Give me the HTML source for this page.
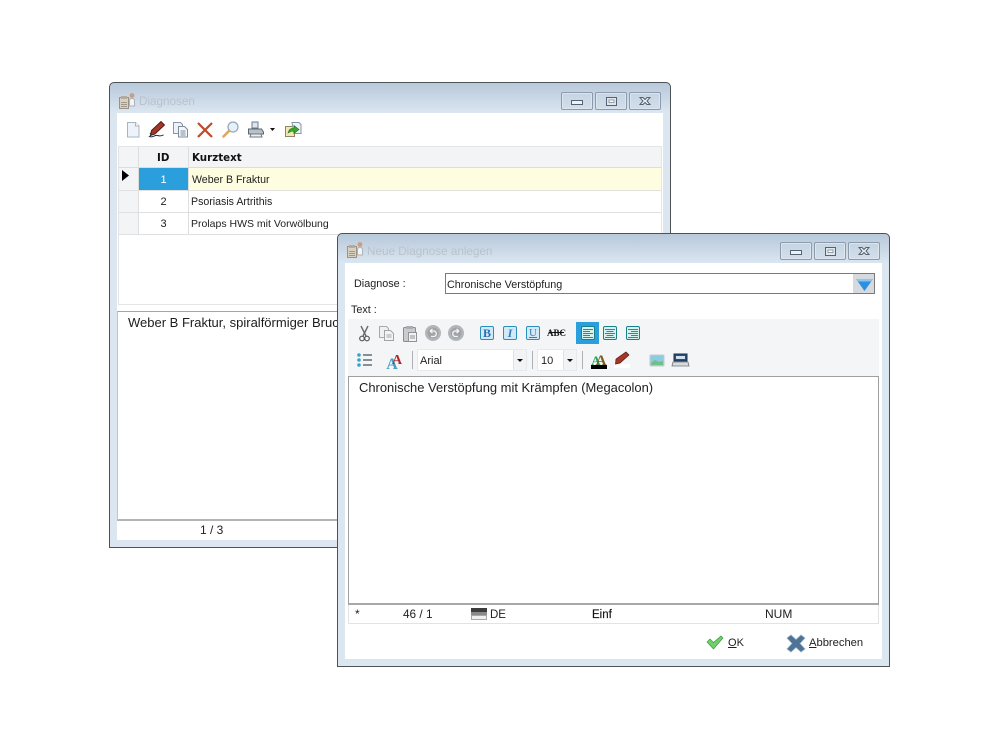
<!DOCTYPE html>
<html lang="de"><head><meta charset="utf-8"><title>Diagnosen</title>
<style>
html,body{margin:0;padding:0;background:#fff;width:1000px;height:750px;overflow:hidden}
body{position:relative;font-family:"Liberation Sans",Arial,sans-serif;font-size:11px;color:#222}
.a{position:absolute;box-sizing:border-box}
.t{position:absolute;white-space:nowrap;line-height:14px}
.win{position:absolute;box-sizing:border-box;border:1px solid #4f5255;border-radius:5px 5px 0 0;background:linear-gradient(#b8c9da 0,#dbe6f1 30px,#dbe6f1 100%)}
.title{position:absolute;color:#b9c2cb;font-size:11.7px;line-height:14px;white-space:nowrap}
.btn{position:absolute;box-sizing:border-box;width:32px;height:18px;border:1px solid #8b9bac;border-radius:2px;background:linear-gradient(#c6d4e2,#d2deea);box-shadow:inset 0 0 0 1px #dde6ef}
svg{position:absolute;left:0;top:0;overflow:visible}
</style></head><body>

<!-- Window 1 -->
<div class="win" style="left:109px;top:82px;width:562px;height:466px"></div>
<div class="a" style="left:117px;top:113px;width:546px;height:427px;background:#fff"></div>
<div class="title" style="left:139px;top:95px">Diagnosen</div>
<div class="btn" style="left:561px;top:92px"></div>
<div class="btn" style="left:595px;top:92px"></div>
<div class="btn" style="left:629px;top:92px"></div>

<!-- grid -->
<div class="a" style="left:118px;top:146px;width:544px;height:159px;border:1px solid #e4e5e5;background:#fff"></div>
<div class="a" style="left:119px;top:147px;width:542px;height:21px;background:#f2f4f6;border-bottom:1px solid #dcdcdc"></div>
<div class="a" style="left:119px;top:168px;width:20px;height:66px;background:#f2f4f6"></div>
<div class="a" style="left:139px;top:168px;width:49px;height:22px;background:#2a9fdc"></div>
<div class="a" style="left:188px;top:168px;width:473px;height:22px;background:#fefde0"></div>
<div class="a" style="left:119px;top:190px;width:542px;height:1px;background:#e0e0e0"></div>
<div class="a" style="left:119px;top:212px;width:542px;height:1px;background:#e0e0e0"></div>
<div class="a" style="left:119px;top:234px;width:542px;height:1px;background:#e0e0e0"></div>
<div class="a" style="left:138px;top:147px;width:1px;height:87px;background:#dedede"></div>
<div class="a" style="left:188px;top:147px;width:1px;height:87px;background:#dedede"></div>
<div class="t" style="left:157px;top:151px;font-family:'DejaVu Sans',sans-serif;font-weight:bold;font-size:10.3px;color:#111">ID</div>
<div class="t" style="left:192px;top:151px;font-family:'DejaVu Sans',sans-serif;font-weight:bold;font-size:10.3px;color:#111">Kurztext</div>
<div class="t" style="left:139px;width:49px;text-align:center;top:173px;color:#fff;font-size:11px">1</div>
<div class="t" style="left:139px;width:49px;text-align:center;top:195px;font-size:11px">2</div>
<div class="t" style="left:139px;width:49px;text-align:center;top:217px;font-size:11px">3</div>
<div class="t" style="left:192px;top:173px;font-size:10.6px">Weber B Fraktur</div>
<div class="t" style="left:191px;top:195px;font-size:10.6px">Psoriasis Artrithis</div>
<div class="t" style="left:191px;top:217px;font-size:10.5px">Prolaps HWS mit Vorwölbung</div>

<!-- memo -->
<div class="a" style="left:117px;top:311px;width:546px;height:210px;border-top:1px solid #a5a5a5;border-bottom:2px solid #b4b4b4;border-left:1px solid #c4c4c4;background:#fff"></div>
<div class="t" style="left:128px;top:315px;font-size:13px;line-height:16px;width:210px;overflow:hidden;color:#1c1c1c">Weber B Fraktur, spiralförmiger Bruch</div>
<div class="t" style="left:200px;top:523px;font-size:12px;color:#222">1 / 3</div>

<svg width="1000" height="750" viewBox="0 0 1000 750">
  <!-- title icon -->
  <g id="ti">
    <rect x="119.500" y="97.500" width="9" height="11" fill="#d9d0c0" stroke="#9a9286"/>
    <rect x="121" y="96" width="6" height="3" fill="#b3ab9c"/>
    <path d="M121 102.500h6M121 104.500h6M121 106.500h6" stroke="#a0988a"/>
    <circle cx="132" cy="95.500" r="2.400" fill="#c99f84"/>
    <path d="M129.500 106v-5.500q0-2 2.500-2t2.500 2v5.500z" fill="#f2f4f6" stroke="#aeb4ba"/>
  </g>
  <!-- window buttons -->
  <rect x="571.500" y="100.500" width="11" height="4" fill="#eef1f5" stroke="#55626f"/>
  <rect x="606.500" y="97.500" width="10" height="8" fill="#dfe6ee" stroke="#55626f"/><rect x="609" y="100" width="5" height="2.500" fill="#fff" stroke="#5a6875" stroke-width=".6"/>
  <path d="M640 97.500l3 0 2 2 2-2 3 0-3 3.500 3 3.500-3 0-2-2-2 2-3 0 3-3.500z" fill="#eef1f5" stroke="#55626f"/>

  <!-- toolbar window 1 -->
  <path d="M127.500 122.500h8l3.500 3.500v11h-11.500z" fill="#eef3fa" stroke="#a9b4c1"/><path d="M135.500 122.500v3.500h3.500" fill="#fff" stroke="#a9b4c1"/>
  <path d="M151.500 130.500l9.500-9 3.500 3.500-9.500 9-4.500 1.500z" fill="#a53526" stroke="#4a1a12" stroke-width=".9"/>
  <path d="M150 133q2 2-.5 3.500c4 1.500 5-2 8-1 3 1 4 0 6-.5" fill="none" stroke="#1c2a3a" stroke-width="1"/>
  <path d="M173.500 122.500h7l2 2v9h-9z" fill="#eef2f7" stroke="#8796a6"/><path d="M178.500 126.500h6l3 3v7.500h-9z" fill="#f3f6fa" stroke="#7c8c9d"/><path d="M180.500 131h5M180.500 133h5M180.500 135h5" stroke="#7c8c9d"/>
  <path d="M198 123l14 14M212 123l-14 14" stroke="#c04a2a" stroke-width="2.200"/>
  <circle cx="233" cy="127" r="5" fill="#e2f1fb" stroke="#9aa8b4" stroke-width="1.300"/><path d="M229 131l-5.500 5.500" stroke="#d9a764" stroke-width="2.600" stroke-linecap="round"/>
  <path d="M252 122h6v6h-6z" fill="#dde6ef" stroke="#6d7c8a"/><path d="M248.500 129h13l2 3v2h-15z" fill="#b9c1c8" stroke="#5a6670"/><path d="M251 134h10l1 3h-12z" fill="#eef0f2" stroke="#6d7780"/>
  <path d="M270 128h5l-2.500 3z" fill="#111"/>
  <path d="M285.500 126.500h9v10h-9z" fill="#f2e8b5" stroke="#8d8660"/><path d="M292 122.500h7l2 2v9h-7z" fill="#eef2f7" stroke="#8796a6"/><path d="M288 133q1-5 6-5v-2.500l5 4-5 4v-2.500q-3 0-6 2z" fill="#3ba72e" stroke="#23701b" stroke-width=".6"/>
  <path d="M122 170l7 5.500-7 5.500z" fill="#000"/>
</svg>

<!-- Window 2 -->
<div class="win" style="left:337px;top:233px;width:553px;height:434px"></div>
<div class="a" style="left:345px;top:263px;width:537px;height:396px;background:#fff"></div>
<div class="title" style="left:367px;top:245px">Neue Diagnose anlegen</div>
<div class="btn" style="left:780px;top:242px"></div>
<div class="btn" style="left:814px;top:242px"></div>
<div class="btn" style="left:848px;top:242px"></div>

<div class="t" style="left:354px;top:277px;font-size:10.8px">Diagnose :</div>
<div class="a" style="left:445px;top:273px;width:430px;height:21px;border:1px solid #7a7a7a;background:#fff"></div>
<div class="t" style="left:447px;top:278px;font-size:10.8px">Chronische Verstöpfung</div>
<div class="a" style="left:853px;top:274px;width:21px;height:19px;background:#d6dade"></div>
<div class="t" style="left:351px;top:303px;font-size:10.8px">Text :</div>

<div class="a" style="left:348px;top:319px;width:531px;height:57px;background:#f3f5f7"></div>
<div class="a" style="left:576px;top:322px;width:23px;height:22px;background:#2a9fdc"></div>

<div class="a" style="left:417px;top:349px;width:110px;height:22px;background:#fff;border:1px solid #e6e8ea"></div>
<div class="a" style="left:513px;top:350px;width:13px;height:20px;background:#f1f3f5;border-left:1px solid #e0e2e4"></div>
<div class="t" style="left:420px;top:354px;font-size:11px">Arial</div>
<div class="a" style="left:537px;top:349px;width:40px;height:22px;background:#fff;border:1px solid #e6e8ea"></div>
<div class="a" style="left:563px;top:350px;width:13px;height:20px;background:#f1f3f5;border-left:1px solid #e0e2e4"></div>
<div class="t" style="left:541px;top:354px;font-size:11px">10</div>
<div class="a" style="left:412px;top:351px;width:1px;height:18px;background:#aeb2b6"></div>
<div class="a" style="left:532px;top:351px;width:1px;height:18px;background:#aeb2b6"></div>
<div class="a" style="left:582px;top:351px;width:1px;height:18px;background:#aeb2b6"></div>

<div class="a" style="left:348px;top:376px;width:531px;height:229px;border:1px solid #9f9f9f;border-bottom:2px solid #a8a8a8;background:#fff"></div>
<div class="t" style="left:359px;top:380px;font-size:12.95px;line-height:16px;color:#222">Chronische Verstöpfung mit Krämpfen (Megacolon)</div>

<div class="a" style="left:348px;top:605px;width:531px;height:19px;border:1px solid #e2e3e3;border-top:none;background:#fff"></div>
<div class="t" style="left:355px;top:607px;font-size:12px">*</div>
<div class="t" style="left:403px;top:607px;font-size:11.8px">46 / 1</div>
<div class="t" style="left:490px;top:608px;font-size:11.5px">DE</div>
<div class="t" style="left:592px;top:608px;font-size:11.5px;color:#111;-webkit-text-stroke:.15px #111">Einf</div>
<div class="t" style="left:765px;top:607px;font-size:12px">NUM</div>

<div class="t" style="left:728px;top:636px;font-size:11px"><u>O</u>K</div>
<div class="t" style="left:809px;top:636px;font-size:11.2px"><u>A</u>bbrechen</div>

<svg width="1000" height="750" viewBox="0 0 1000 750">
  <!-- title icon -->
  <g transform="translate(228 149)">
    <rect x="119.500" y="97.500" width="9" height="11" fill="#d9d0c0" stroke="#9a9286"/>
    <rect x="121" y="96" width="6" height="3" fill="#b3ab9c"/>
    <path d="M121 102.500h6M121 104.500h6M121 106.500h6" stroke="#a0988a"/>
    <circle cx="132" cy="95.500" r="2.400" fill="#c99f84"/>
    <path d="M129.500 106v-5.500q0-2 2.500-2t2.500 2v5.500z" fill="#f2f4f6" stroke="#aeb4ba"/>
  </g>
  <!-- window buttons -->
  <rect x="790.500" y="250.500" width="11" height="4" fill="#eef1f5" stroke="#55626f"/>
  <rect x="825.500" y="247.500" width="10" height="8" fill="#dfe6ee" stroke="#55626f"/><rect x="828" y="250" width="5" height="2.500" fill="#fff" stroke="#5a6875" stroke-width=".6"/>
  <path d="M859 247.500l3 0 2 2 2-2 3 0-3 3.500 3 3.500-3 0-2-2-2 2-3 0 3-3.500z" fill="#eef1f5" stroke="#55626f"/>
  <!-- dropdown arrow -->
  <path d="M856 279h17l-8.500 12z" fill="#2c8fe0"/><path d="M856 279h17l-2 2.500h-13z" fill="#8cc4f0"/>

  <!-- row 1: scissors etc. (grey) -->
  <path d="M361 326l5 10M368 326l-5 10" stroke="#6b6b6b" stroke-width="1.400"/><circle cx="362" cy="338.500" r="2.300" fill="none" stroke="#555" stroke-width="1.200"/><circle cx="367" cy="338.500" r="2.300" fill="none" stroke="#555" stroke-width="1.200"/>
  <path d="M379.500 326.500h7l2 2v9h-9z" fill="#eef0f2" stroke="#a6aaae"/><path d="M384.500 330.500h6l3 3v7h-9z" fill="#f3f4f6" stroke="#a0a4a8"/><path d="M386.500 335h5M386.500 337h5" stroke="#a0a4a8"/>
  <rect x="403.500" y="327.500" width="12" height="14" rx="1" fill="#c9cccf" stroke="#888c90"/><rect x="406" y="326" width="7" height="3" fill="#aaaeb2"/><path d="M408.500 332.500h8v9h-8z" fill="#f1f2f3" stroke="#909498"/><path d="M410 336h5M410 338h5" stroke="#909498"/>
  <circle cx="433" cy="333" r="8" fill="#b2b5b9"/><circle cx="433" cy="333" r="5.500" fill="#a0a4a8"/><path d="M430 331h4a2.800 2.800 0 0 1 0 5.500h-3M430 331l2.500-2M430 331l2.500 2" fill="none" stroke="#f4f4f4" stroke-width="1.300"/>
  <circle cx="456" cy="333" r="8" fill="#b2b5b9"/><circle cx="456" cy="333" r="5.500" fill="#a0a4a8"/><path d="M459 331h-4a2.800 2.800 0 0 0 0 5.500h3M459 331l-2.500-2M459 331l-2.500 2" fill="none" stroke="#f4f4f4" stroke-width="1.300"/>

  <!-- B I U -->
  <rect x="480.500" y="326.500" width="13" height="13" rx="1.500" fill="#d2eaf8" stroke="#2b8fbd"/>
  <text x="487" y="337" text-anchor="middle" font-family="Liberation Serif,serif" font-weight="bold" font-size="12" fill="#2a6fb0">B</text>
  <rect x="503.500" y="326.500" width="13" height="13" rx="1.500" fill="#d2eaf8" stroke="#2b8fbd"/>
  <text x="510" y="337" text-anchor="middle" font-family="Liberation Serif,serif" font-style="italic" font-weight="bold" font-size="12" fill="#3a7cb4">I</text>
  <rect x="526.500" y="326.500" width="13" height="13" rx="1.500" fill="#d2eaf8" stroke="#2b8fbd"/>
  <text x="533" y="336" text-anchor="middle" font-family="Liberation Serif,serif" font-size="11" fill="#3a7cb4">U</text><path d="M529 337.500h8" stroke="#3a7cb4"/>
  <text x="556.500" y="336" text-anchor="middle" font-family="Liberation Serif,serif" font-weight="bold" font-size="9" fill="#111">ABC</text><path d="M549 332.500h15" stroke="#111"/>

  <!-- align -->
  <rect x="581.500" y="326.500" width="13" height="13" rx="1.500" fill="#d6f2ee" stroke="#1a7f8d"/><path d="M583 329.500h10M583 331.500h7M583 333.500h10M583 335.500h7M583 337.500h10" stroke="#0aa84f"/>
  <rect x="603.500" y="326.500" width="13" height="13" rx="1.500" fill="#d6f2ee" stroke="#1a7f8d"/><path d="M605 329.500h10M606.500 331.500h7M605 333.500h10M606.500 335.500h7M605 337.500h10" stroke="#0aa84f"/>
  <rect x="626.500" y="326.500" width="13" height="13" rx="1.500" fill="#d6f2ee" stroke="#1a7f8d"/><path d="M628 329.500h10M631 331.500h7M628 333.500h10M631 335.500h7M628 337.500h10" stroke="#0aa84f"/>

  <!-- row 2 -->
  <circle cx="359" cy="355" r="1.800" fill="#3aa3c8"/><circle cx="359" cy="360" r="1.800" fill="#3aa3c8"/><circle cx="359" cy="365" r="1.800" fill="#3aa3c8"/>
  <path d="M363 355h9M363 360h9M363 365h9" stroke="#45525e" stroke-width="1.200"/>
  <text x="392" y="369" text-anchor="middle" font-family="Liberation Serif,serif" font-weight="bold" font-size="16" fill="#4a9cc4">A</text>
  <text x="397" y="364" text-anchor="middle" font-family="Liberation Serif,serif" font-weight="bold" font-size="14" fill="#b02a2a">A</text>

  <path d="M517 359h6l-3 3z" fill="#111"/><path d="M567 359h6l-3 3z" fill="#111"/>

  <text x="596" y="365" text-anchor="middle" font-family="Liberation Serif,serif" font-weight="bold" font-size="13" fill="#1fa35c">A</text>
  <text x="601" y="365" text-anchor="middle" font-family="Liberation Serif,serif" font-weight="bold" font-size="15" fill="#7d5a1e">A</text>
  <rect x="591" y="365" width="16" height="4" fill="#000"/>
  <rect x="614" y="364" width="16" height="4" fill="#fff"/>
  <path d="M616 359l10-7 3 3-9 8-4.500 1z" fill="#a53526" stroke="#5a1a12" stroke-width=".7"/>
  <rect x="650" y="355" width="14" height="11" rx="1" fill="#8ccbe0" stroke="#c6c9cc"/><path d="M651 363l4-3 4 2 4-1v4h-12z" fill="#6fbf8a"/>
  <path d="M674 354h13v7h-13z" fill="#1f4f8f" stroke="#25303c"/><path d="M676 356h9v3h-9z" fill="#cfe0f0"/><path d="M673 362h15l1 4h-17z" fill="#d8dbde" stroke="#70767c" stroke-width=".8"/>

  <!-- status flag -->
  <rect x="471" y="608" width="16" height="4" fill="#3c3c3c"/><rect x="471" y="612" width="16" height="3" fill="#8a8a8a"/><rect x="471.500" y="615.500" width="15" height="4" fill="#f0f0f0" stroke="#a8a8a8"/>

  <!-- OK check -->
  <path d="M707 642l3-3 3.500 3.500 7.500-6.500 2 2-9.500 11z" fill="#6fd06a" stroke="#3d9a44" stroke-width=".7"/>
  <!-- cancel X -->
  <path d="M787 638l4-3 5 4.500 5-4.500 4 3-5 5.500 5 5.500-4 3-5-4.500-5 4.500-4-3 5-5.500z" fill="#4e7394" stroke="#9ab2c7" stroke-width=".7"/>
</svg>
</body></html>
